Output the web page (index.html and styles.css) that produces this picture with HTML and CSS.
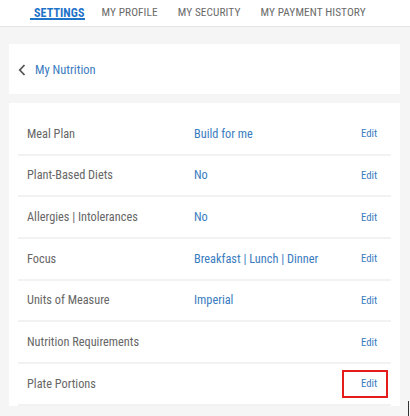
FILE: index.html
```html
<!DOCTYPE html>
<html>
<head>
<meta charset="utf-8">
<link rel="stylesheet" href="styles.css">
</head>
<body>
<nav class="tabs">
  <a class="tab active">SETTINGS</a>
  <a class="tab">MY PROFILE</a>
  <a class="tab">MY SECURITY</a>
  <a class="tab">MY PAYMENT HISTORY</a>
</nav>
<main class="content">
  <section class="card header-card">
    <svg class="chev" width="8" height="12" viewBox="0 0 8 12"><path d="M6.5 1 L1.8 6 L6.5 11" fill="none" stroke="#555" stroke-width="1.8"/></svg>
    <span class="crumb">My Nutrition</span>
  </section>
  <section class="card list-card">
    <div class="row"><span class="label">Meal Plan</span><span class="value">Build for me</span><span class="edit">Edit</span></div>
    <div class="row"><span class="label">Plant-Based Diets</span><span class="value">No</span><span class="edit">Edit</span></div>
    <div class="row"><span class="label">Allergies | Intolerances</span><span class="value">No</span><span class="edit">Edit</span></div>
    <div class="row"><span class="label">Focus</span><span class="value">Breakfast | Lunch | Dinner</span><span class="edit">Edit</span></div>
    <div class="row"><span class="label">Units of Measure</span><span class="value">Imperial</span><span class="edit">Edit</span></div>
    <div class="row"><span class="label">Nutrition Requirements</span><span class="value"></span><span class="edit">Edit</span></div>
    <div class="row"><span class="label">Plate Portions</span><span class="value"></span><span class="edit highlight">Edit</span></div>
  </section>
</main>
<div class="cursor-mark"></div>
</body>
</html>
```
FILE: styles.css
```css
html, body { margin: 0; padding: 0; }
body {
  width: 410px; height: 416px; overflow: hidden; position: relative;
  background: #f5f5f5;
  font-family: "Roboto Condensed", "Liberation Sans Narrow", "DejaVu Sans Condensed", Roboto, sans-serif;
  -webkit-font-smoothing: antialiased;
}
.tabs {
  height: 26px; background: #fff; border-bottom: 1px solid #e4e4e4;
  display: flex; align-items: flex-start; padding-left: 30px;
}
.tab {
  font-size: 11.3px; color: #6a6a6a; padding: 6px 0 0; height: 12px;
  margin-right: 20px; letter-spacing: 0.1px;
}
.tab.active {
  color: #1f73c8; font-weight: bold; border-bottom: 2px solid #1f73c8;
  padding: 6px 1px 0 4px; margin-right: 16px; font-size: 12px;
}
.content { padding: 17px 10px 0 9px; display: flex; flex-direction: column; gap: 9px; }
.card { background: #fff; }
.header-card { height: 50px; display: flex; align-items: center; padding-left: 9px; gap: 9px; }
.chev { margin-top: 1px; }
.crumb { color: #3a7cc0; font-size: 12.5px; }
.list-card { padding: 11px 9px 0; }
.row {
  height: 39.67px; border-bottom: 2px solid #f2f2f2; display: flex; align-items: center;
  padding-left: 9px; position: relative;
}
.label { width: 167px; color: #666; font-size: 12.3px; }
.value { flex: 1; color: #3a7cc0; font-size: 12.3px; }
.edit { color: #3a7cc0; font-size: 10.8px; width: 30px; }
.edit.highlight::after {
  content: ""; position: absolute; right: 3px; top: 6px; width: 42px; height: 24px;
  border: 2px solid #e41c1c;
}
.cursor-mark {
  position: absolute; left: 408px; top: 401px; width: 1px; height: 15px; background: #333;
}
```
